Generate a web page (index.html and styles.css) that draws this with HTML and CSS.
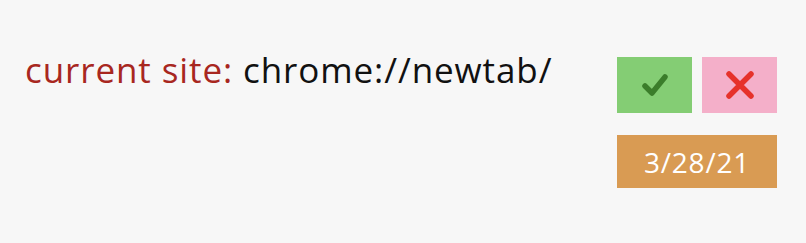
FILE: index.html
```html
<!DOCTYPE html>
<html lang="en">

<head>
    <meta charset="UTF-8">
    <meta name="viewport" content="width=device-width, initial-scale=1.0">
    <title>Site Tracker</title>
    <link rel="stylesheet" href="styles.css">
</head>

<body>
    <div class="popup">
        <div class="site-info">
            <span class="site-label">current site:</span>
            <span class="site-url">chrome://newtab/</span>
        </div>

        <div class="controls">
            <div class="buttons">
                <button class="btn btn-yes" aria-label="Accept">
                    <svg width="30" height="30" viewBox="0 0 30 30">
                        <path d="M5 16 L12 23 L25 7" fill="none" stroke="#3b7d2b" stroke-width="5.5" stroke-linecap="round" stroke-linejoin="round" />
                    </svg>
                </button>
                <button class="btn btn-no" aria-label="Reject">
                    <svg width="30" height="30" viewBox="0 0 30 30">
                        <path d="M4 4 L26 26 M26 4 L4 26" fill="none" stroke="#e6322b" stroke-width="5.5" stroke-linecap="round" />
                    </svg>
                </button>
            </div>
            <div class="date">3/28/21</div>
        </div>
    </div>
</body>

</html>
```

FILE: styles.css
```css
body {
    margin: 0;
    padding: 0;
    background-color: #f7f7f7;
    font-family: "Open Sans", sans-serif;
}

.popup {
    display: flex;
    justify-content: space-between;
    align-items: flex-start;
    padding: 48px 29px 0 25px;
}

.site-info {
    font-size: 35px;
    line-height: 44px;
    letter-spacing: 0.9px;
    white-space: nowrap;
}

.site-label {
    color: #a8271f;
}

.site-url {
    color: #111;
}

.controls {
    display: flex;
    flex-direction: column;
    gap: 22px;
    margin-top: 9px;
}

.buttons {
    display: flex;
    gap: 10px;
}

.btn {
    width: 75px;
    height: 56px;
    border: none;
    padding: 0;
    display: flex;
    align-items: center;
    justify-content: center;
    cursor: pointer;
}

.btn-yes {
    background-color: #84cd74;
}

.btn-no {
    background-color: #f4afc9;
}

.date {
    width: 160px;
    height: 53px;
    background-color: #d99b53;
    color: #fff;
    font-size: 28px;
    letter-spacing: 0.8px;
    display: flex;
    align-items: center;
    justify-content: center;
}
```
